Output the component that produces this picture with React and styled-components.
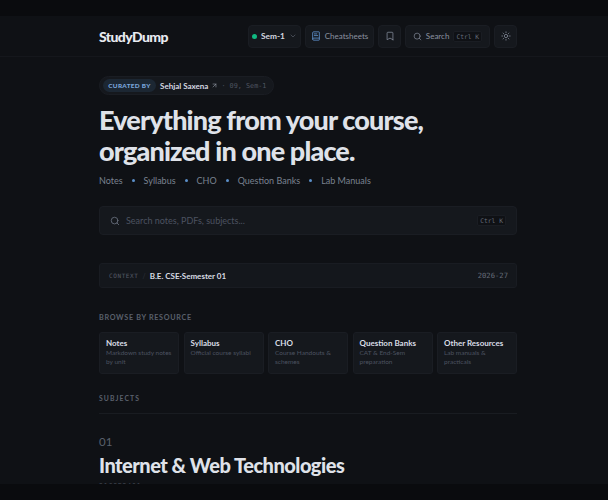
import React from 'react'
import styled, { createGlobalStyle } from 'styled-components'
import { Search, Bookmark, Sun, ChevronDown, BookText, ArrowUpRight } from 'lucide-react'

const GlobalStyle = createGlobalStyle`
    html, body {
        margin: 0;
        height: 100%;
        overflow: hidden;
        background: #0f1115;
    }
    * { box-sizing: border-box; }
    body {
        font-family: "Lato", "Noto Sans", sans-serif;
        color: #e2e5ec;
    }
`

const mono = `"DejaVu Sans Mono", "Liberation Mono", monospace`

const Edge = styled.div`
    position: fixed;
    left: 0;
    right: 0;
    height: 16px;
    background: #0a0b0e;
    z-index: 5;
    ${p => (p.$bottom ? 'bottom: 0;' : 'top: 0;')}
`

const Header = styled.header`
    margin-top: 16px;
    height: 41px;
    border-bottom: 1px solid #15171c;
`

const Wrap = styled.div`
    width: 418px;
    margin-left: 99px;
    height: 100%;
    display: flex;
    align-items: center;
    justify-content: space-between;
`

const Logo = styled.div`
    font-size: 14px;
    font-weight: 900;
    letter-spacing: -0.6px;
    color: #e8eaf0;
`

const Tools = styled.div`
    display: flex;
    gap: 4px;
`

const ToolButton = styled.button`
    height: 23px;
    width: ${p => p.$w}px;
    padding: 0;
    display: flex;
    align-items: center;
    justify-content: center;
    gap: 4px;
    background: #15181d;
    border: 1px solid #1a1d23;
    border-radius: 4px;
    font-family: inherit;
    font-size: ${p => (p.$strong ? 8.3 : 8)}px;
    font-weight: ${p => (p.$strong ? 700 : 400)};
    color: ${p => (p.$strong ? '#d6d9e0' : '#8b92a0')};
    svg { flex: none; }
`

const Dot = styled.span`
    width: 5px;
    height: 5px;
    border-radius: 50%;
    background: #10b981;
`

const Kbd = styled.span`
    font-family: ${mono};
    font-size: 6.3px;
    color: #666d7a;
    background: #0f1115;
    border: 1px solid #1a1d23;
    border-radius: 2px;
    padding: 1px 2px;
`

const Main = styled.main`
    width: 418px;
    margin-left: 99px;
`

const Pill = styled.div`
    margin-top: 19px;
    width: 175px;
    height: 19px;
    padding: 0 3px;
    display: flex;
    align-items: center;
    background: #15181d;
    border: 1px solid #1a1d23;
    border-radius: 10px;
`

const PillBadge = styled.span`
    width: 53px;
    height: 13px;
    display: flex;
    align-items: center;
    justify-content: center;
    background: #1c2733;
    border-radius: 7px;
    font-size: 6.4px;
    font-weight: 900;
    letter-spacing: 0.3px;
    color: #7aa6dc;
`

const PillName = styled.span`
    margin-left: 4px;
    font-size: 8px;
    font-weight: 700;
    color: #d6d9e2;
`

const PillMeta = styled.span`
    margin-left: 3px;
    font-family: ${mono};
    font-size: 6.8px;
    color: #4e5460;
`

const Headline = styled.h1`
    margin: 9px 0 0;
    font-size: 27px;
    line-height: 31px;
    font-weight: 900;
    letter-spacing: -0.85px;
    color: #dfe2e9;
`

const Chips = styled.div`
    margin-top: 7px;
    height: 14px;
    display: flex;
    align-items: center;
    gap: 9px;
    font-size: 9px;
    color: #7a8290;
`

const ChipDot = styled.span`
    width: 3px;
    height: 3px;
    border-radius: 50%;
    background: #5b8fc9;
`

const SearchBar = styled.div`
    margin-top: 19px;
    height: 29px;
    padding: 0 10px;
    display: flex;
    align-items: center;
    gap: 6px;
    background: #15181d;
    border: 1px solid #1a1d23;
    border-radius: 4px;
    color: #6a7180;
    font-size: 9px;
`

const SearchText = styled.span`
    flex: 1;
    color: #4c5260;
`

const ContextBar = styled.div`
    margin-top: 28px;
    height: 25px;
    padding: 0 8px 0 9px;
    display: flex;
    align-items: center;
    background: #14171c;
    border: 1px solid #191c22;
    border-radius: 3px;
`

const ContextLabel = styled.span`
    font-family: ${mono};
    font-size: 6px;
    letter-spacing: 0.6px;
    color: #565c68;
`

const Slash = styled.span`
    margin: 0 4px;
    font-size: 7px;
    color: #2e323b;
`

const ContextValue = styled.span`
    flex: 1;
    font-size: 8px;
    font-weight: 700;
    color: #d8dbe3;
`

const Year = styled.span`
    font-family: ${mono};
    font-size: 7.2px;
    color: #666d7a;
`

const SectionLabel = styled.div`
    font-size: ${p => p.$size}px;
    font-weight: 700;
    letter-spacing: ${p => p.$track}px;
    color: #5a606c;
    text-transform: uppercase;
`

const BrowseLabel = styled(SectionLabel)`
    margin-top: 24px;
    line-height: 12px;
`

const CardGrid = styled.div`
    margin-top: 8px;
    display: grid;
    grid-template-columns: repeat(5, 80px);
    justify-content: space-between;
`

const Card = styled.article`
    height: 42px;
    padding: 5px 3px 0 6px;
    background: #15181d;
    border: 1px solid #1a1d23;
    border-radius: 3px;
`

const CardTitle = styled.h4`
    margin: 0;
    font-size: 8px;
    line-height: 10px;
    font-weight: 700;
    color: #d9dde6;
`

const CardText = styled.p`
    margin: 1px 0 0;
    font-size: 6.5px;
    line-height: 8.6px;
    color: #4c5260;
`

const SubjectsHead = styled(SectionLabel)`
    margin-top: 19px;
    padding-bottom: 9px;
    line-height: 11px;
    border-bottom: 1px solid #191c21;
`

const SubjectIndex = styled.div`
    margin-top: 21px;
    font-size: 11.5px;
    line-height: 14px;
    color: #5a606c;
`

const SubjectTitle = styled.h2`
    margin: 4px 0 0;
    font-size: 20px;
    line-height: 24px;
    font-weight: 900;
    letter-spacing: -0.5px;
    color: #dfe2e9;
`

const SubjectCode = styled.div`
    margin-top: 5px;
    font-family: ${mono};
    font-size: 6.5px;
    letter-spacing: 0.8px;
    color: #4e5460;
`

const resources = [
    { title: 'Notes', text: 'Markdown study notes by unit' },
    { title: 'Syllabus', text: 'Official course syllabi' },
    { title: 'CHO', text: 'Course Handouts & schemes' },
    { title: 'Question Banks', text: 'CAT & End-Sem preparation' },
    { title: 'Other Resources', text: 'Lab manuals & practicals' },
]

const chips = ['Notes', 'Syllabus', 'CHO', 'Question Banks', 'Lab Manuals']

export default function App() {
    return (
        <>
            <GlobalStyle />
            <Edge />
            <Header>
                <Wrap>
                    <Logo>StudyDump</Logo>
                    <Tools>
                        <ToolButton $w={53} $strong>
                            <Dot />
                            Sem-1
                            <ChevronDown size={8} color="#5a606c" />
                        </ToolButton>
                        <ToolButton $w={69}>
                            <BookText size={10} color="#5f93cf" />
                            Cheatsheets
                        </ToolButton>
                        <ToolButton $w={23}>
                            <Bookmark size={10} color="#7c8391" />
                        </ToolButton>
                        <ToolButton $w={85}>
                            <Search size={9} color="#7c8391" />
                            Search
                            <Kbd>Ctrl K</Kbd>
                        </ToolButton>
                        <ToolButton $w={23}>
                            <Sun size={10} color="#7c8391" />
                        </ToolButton>
                    </Tools>
                </Wrap>
            </Header>
            <Main>
                <Pill>
                    <PillBadge>CURATED BY</PillBadge>
                    <PillName>Sehjal Saxena</PillName>
                    <ArrowUpRight size={7} color="#9aa0ad" style={{ marginLeft: 3 }} />
                    <PillMeta>· 09, Sem-1</PillMeta>
                </Pill>
                <Headline>
                    Everything from your course,
                    <br />
                    organized in one place.
                </Headline>
                <Chips>
                    {chips.map((chip, i) => (
                        <React.Fragment key={chip}>
                            {i > 0 && <ChipDot />}
                            <span>{chip}</span>
                        </React.Fragment>
                    ))}
                </Chips>
                <SearchBar>
                    <Search size={10} />
                    <SearchText>Search notes, PDFs, subjects...</SearchText>
                    <Kbd>Ctrl K</Kbd>
                </SearchBar>
                <ContextBar>
                    <ContextLabel>CONTEXT</ContextLabel>
                    <Slash>/</Slash>
                    <ContextValue>B.E. CSE·Semester 01</ContextValue>
                    <Year>2026-27</Year>
                </ContextBar>
                <BrowseLabel $size={7.2} $track={0.7}>Browse by resource</BrowseLabel>
                <CardGrid>
                    {resources.map(item => (
                        <Card key={item.title}>
                            <CardTitle>{item.title}</CardTitle>
                            <CardText>{item.text}</CardText>
                        </Card>
                    ))}
                </CardGrid>
                <SubjectsHead $size={6.8} $track={1.1}>Subjects</SubjectsHead>
                <SubjectIndex>01</SubjectIndex>
                <SubjectTitle>Internet &amp; Web Technologies</SubjectTitle>
                <SubjectCode>21CSE2401</SubjectCode>
            </Main>
            <Edge $bottom />
        </>
    )
}
